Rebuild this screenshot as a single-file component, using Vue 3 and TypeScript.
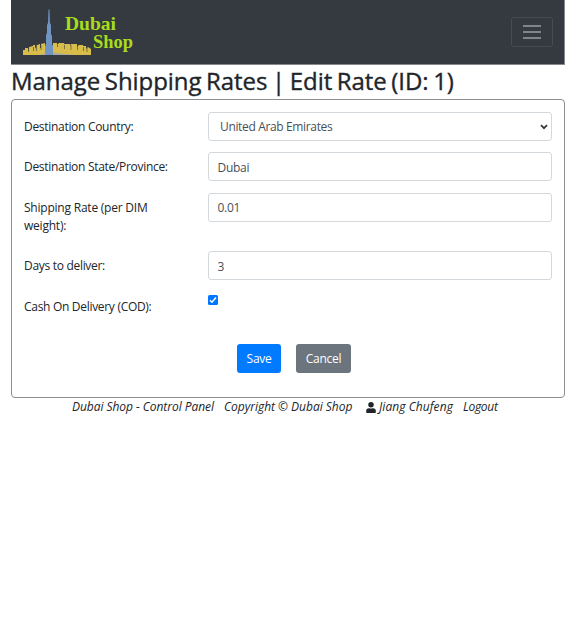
<script setup lang="ts">
import { ref } from 'vue'

const country = ref('United Arab Emirates')
const state = ref('Dubai')
const rate = ref('0.01')
const days = ref('3')
const cod = ref(true)
</script>

<template>
  <div class="page">
    <nav class="navbar">
      <svg class="logo" width="112" height="48" viewBox="0 0 112 48">
        <path class="city" d="M0 46V41H2V39H5V42H6V38L10 37V36H12V40L14 36L17 35V39H18V35L22 34V46ZM30 46V34H34V36L36 34H41V35H47V37L48 35H54V38L56 36H60V37H63V40L65 38L68 40V46Z" />
        <path class="gaps" d="M5.500 40V43M10.500 38V42M13.500 37V42M18 36V41M34.500 36V38M41.500 36V40M48 36V41M54.500 37V41M60.500 38V42M64 39V43" />
        <path class="ground" d="M16 46Q27 43 34 44T52 46Z" />
        <path class="tower" d="M25.500 0.500H26.500L27 14L28 16V25L29 27V35L30 37V46H22V37L23 35V26L24 24V16L25 14Z" />
        <text class="brand" x="42" y="21" textLength="51" lengthAdjust="spacingAndGlyphs">Dubai</text>
        <text class="brand" x="70" y="39" textLength="40" lengthAdjust="spacingAndGlyphs">Shop</text>
      </svg>
      <button class="toggler" aria-label="Menu">
        <svg width="20" height="16" viewBox="0 0 20 16"><path d="M1 2H19M1 8H19M1 14H19" /></svg>
      </button>
    </nav>
    <h2 class="title">Manage Shipping Rates | Edit Rate (ID: 1)</h2>
    <form class="card" @submit.prevent>
      <div class="row">
        <label>Destination Country:</label>
        <div class="control select-wrap">
          <select v-model="country"><option>United Arab Emirates</option></select>
          <svg class="chevron" width="8" height="6" viewBox="0 0 8 6"><path d="M1 1.200L4 4.200L7 1.200" /></svg>
        </div>
      </div>
      <div class="row"><label>Destination State/Province:</label><input v-model="state" class="control" /></div>
      <div class="row tall"><label class="wide">Shipping Rate (per DIM<br />weight):</label><input v-model="rate" class="control" /></div>
      <div class="row"><label>Days to deliver:</label><input v-model="days" class="control" /></div>
      <div class="row">
        <label>Cash On Delivery (COD):</label>
        <button type="button" class="check" role="checkbox" :aria-checked="cod" @click="cod = !cod">
          <svg v-if="cod" width="10" height="10" viewBox="0 0 10 10"><path d="M2 5.200L4 7.200L8 2.600" /></svg>
        </button>
      </div>
      <div class="actions">
        <button class="btn save">Save</button>
        <button type="button" class="btn cancel">Cancel</button>
      </div>
    </form>
    <footer class="footer">
      <span class="panel">Dubai Shop - Control Panel</span>
      <span class="copy">Copyright © Dubai Shop</span>
      <svg class="user" width="10" height="11" viewBox="0 0 448 512"><path d="M224 256a128 128 0 1 0 0-256 128 128 0 0 0 0 256zm90 32h-17a174 174 0 0 1-146 0h-17A134 134 0 0 0 0 422v42c0 27 21 48 48 48h352c27 0 48-21 48-48v-42a134 134 0 0 0-134-134z" /></svg>
      <span class="name">Jiang Chufeng</span>
      <span class="logout">Logout</span>
    </footer>
  </div>
</template>

<style>
body { background: #fff; }
</style>

<style scoped>
* { box-sizing: border-box; }
.page { padding: 0 11px; font: 12px/18px "Open Sans", "Noto Sans", sans-serif; color: #212529; letter-spacing: -0.300px; }
button, input, select { font: inherit; letter-spacing: inherit; margin: 0; }
.navbar { height: 65px; display: flex; align-items: flex-start; justify-content: space-between; padding: 9px 11px 0 12px; background: #343a40; border: solid #868a8f; border-width: 0 1px 1px 0; }
.logo { display: block; }
.city { fill: #d8bd4a; }
.gaps { fill: none; stroke: #62603f; stroke-width: 0.8; }
.ground { fill: #aaa99d; }
.tower { fill: #7094c4; }
.brand { font: bold 19.500px "Liberation Serif", serif; fill: #a8dc1c; letter-spacing: 0; }
.toggler { width: 42px; height: 30px; margin-top: 8px; padding: 0; display: flex; align-items: center; justify-content: center; background: transparent; border: 1px solid #474c52; border-radius: 3px; }
.toggler path { stroke: #999c9f; stroke-width: 1.500; }
.title { height: 34px; margin: 0; font-size: 24px; line-height: 32px; font-weight: 500; letter-spacing: -0.050px; word-spacing: -1.600px; -webkit-text-stroke: 0.350px #212529; white-space: nowrap; }
.card { height: 299px; padding: 12px; border: 1px solid #8b8f94; border-radius: 4px; }
.row { display: grid; grid-template-columns: 184px 1fr; align-items: start; height: 40.400px; }
.row.tall { height: 58.400px; }
label { padding-top: 6px; white-space: nowrap; }
label.wide { letter-spacing: -0.220px; }
.control { width: 100%; height: 29px; color: #495057; background: #fff; border: 1px solid #d4d9de; border-radius: 3px; }
input.control { padding: 1px 8.500px 0; outline: none; }
.select-wrap { display: flex; align-items: center; padding: 0 3px 0 11px; letter-spacing: -0.350px; }
select { flex: 1; appearance: none; border: 0; padding: 0; color: inherit; background: transparent; }
.chevron path { fill: none; stroke: #343a40; stroke-width: 1.800; }
.check { width: 10px; height: 10px; margin-top: 3px; padding: 0; border: 0; border-radius: 1.500px; background: #0075ff; display: flex; }
.check path { fill: none; stroke: #fff; stroke-width: 1.500; }
.actions { display: flex; gap: 15px; padding: 12px 0 0 213px; }
.btn { height: 29px; padding: 1px 0 0; color: #fff; border: 0; border-radius: 3px; }
.save { width: 44px; background: #007bff; }
.cancel { width: 55px; background: #6c757d; }
.footer { display: flex; align-items: center; height: 18px; padding-left: 61px; font-style: italic; white-space: nowrap; }
.panel { width: 152px; letter-spacing: -0.050px; }
.copy { width: 142px; letter-spacing: -0.020px; }
.user { margin-right: 3px; fill: #212529; }
.name { width: 84px; letter-spacing: 0.070px; }
</style>
